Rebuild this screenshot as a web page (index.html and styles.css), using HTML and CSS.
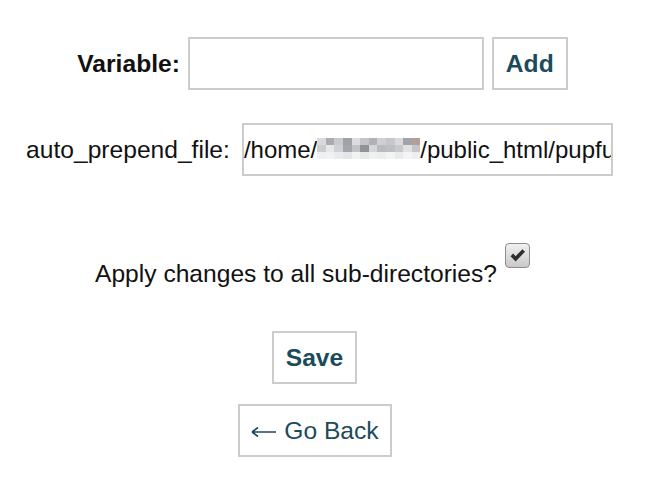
FILE: index.html
```html
<!DOCTYPE html>
<html>
<head>
<meta charset="utf-8">
<link rel="stylesheet" href="styles.css">
</head>
<body>
<form class="page">
  <div class="row row-var">
    <label class="label-bold" for="var">Variable:</label>
    <input class="field field-var" id="var" type="text">
    <button class="btn btn-bold" type="button">Add</button>
  </div>
  <div class="row row-file">
    <label class="label">auto_prepend_file:</label>
    <div class="field field-file"><span class="txt">/home/</span><span class="mosaic"><i style="background:#d9dadc"></i><i style="background:#a9abaf"></i><i style="background:#c9cacd"></i><i style="background:#9fa2a6"></i><i style="background:#dcdddf"></i><i style="background:#c2c4c7"></i><i style="background:#b0b2b6"></i><i style="background:#cfd0d2"></i><i style="background:#c5c7ca"></i><i style="background:#d8d9db"></i><i style="background:#a0a3a8"></i><i style="background:#b59e98"></i><i style="background:#cbcdd0"></i><i style="background:#e7e8e9"></i><i style="background:#d0d1d3"></i><i style="background:#a3a6aa"></i><i style="background:#c1c3c6"></i><i style="background:#8f9297"></i><i style="background:#d5d6d8"></i><i style="background:#b9bbbf"></i><i style="background:#bdbfc2"></i><i style="background:#c7c9cc"></i><i style="background:#e0e1e2"></i><i style="background:#c4c6c9"></i><i style="background:#eeeff0"></i><i style="background:#f1f1f2"></i><i style="background:#eaebec"></i><i style="background:#e4e5e6"></i><i style="background:#f2f2f3"></i><i style="background:#e8e9ea"></i><i style="background:#f0f0f1"></i><i style="background:#eceded"></i><i style="background:#f3f3f4"></i><i style="background:#e9eaeb"></i><i style="background:#f4f4f5"></i><i style="background:#eeeeef"></i></span><span class="txt">/public_html/pupfunctions.php</span></div>
  </div>
  <div class="row row-apply">
    <label class="label label-apply" for="sub">Apply changes to all sub-directories?</label>
    <span class="checkbox" id="sub">
      <svg width="17" height="15" viewBox="0 0 17 15"><path d="M1.5 8.2 L4.2 5.6 L6.6 8.2 L13.4 1.2 L16 3.8 L6.6 13.4 Z" fill="#2e2e2e"/></svg>
    </span>
  </div>
  <div class="row row-save">
    <button class="btn btn-bold" type="button">Save</button>
  </div>
  <div class="row row-back">
    <button class="btn btn-back" type="button"><svg class="arrow" width="26" height="12" viewBox="0 0 26 12"><path d="M1 6 H25 M1 6 L7 1.5 M1 6 L7 10.5" fill="none" stroke="#1b4b5b" stroke-width="1.6"/></svg> Go Back</button>
  </div>
</form>
</body>
</html>
```

FILE: styles.css
```css
html, body {
  margin: 0;
  padding: 0;
  background: #ffffff;
}

body {
  font-family: "Liberation Sans", Arial, sans-serif;
  font-size: 24.6px;
  color: #111111;
}

.page {
  display: flex;
  flex-direction: column;
  padding-top: 37px;
}

.row {
  display: flex;
  justify-content: center;
  align-items: center;
}

.row-var {
  gap: 8px;
  padding-right: 2px;
}

.row-file {
  margin-top: 33px;
  gap: 12px;
  padding-right: 8px;
}

.row-apply {
  margin-top: 67px;
  align-items: flex-start;
  gap: 8px;
  padding-right: 22px;
}

.row-save {
  margin-top: 43px;
  padding-right: 18px;
}

.row-back {
  margin-top: 20px;
  padding-right: 17px;
}

.label-bold {
  font-weight: bold;
  color: #111111;
}

.label {
  color: #111111;
}

.label-apply {
  padding-top: 17px;
  line-height: 28px;
}

.field {
  box-sizing: border-box;
  height: 53px;
  border: 2px solid #cccccc;
  background: #ffffff;
  font-family: "Liberation Sans", Arial, sans-serif;
  font-size: 24px;
  color: #111111;
  outline: none;
  margin: 0;
}

.field-var {
  width: 296px;
  padding: 0 4px;
}

.field-file {
  width: 371px;
  padding: 0 0 0 0;
  display: flex;
  align-items: center;
  overflow: hidden;
  white-space: nowrap;
}

.txt {
  flex: none;
}

.mosaic {
  flex: none;
  display: grid;
  grid-template-columns: repeat(12, 8.6px);
  grid-auto-rows: 7px;
  width: 103px;
  height: 21px;
  margin-top: -2px;
}

.mosaic i {
  display: block;
}

.btn {
  box-sizing: border-box;
  height: 53px;
  border: 2px solid #cccccc;
  background: #ffffff;
  color: #1b4b5b;
  font-family: "Liberation Sans", Arial, sans-serif;
  font-size: 24.6px;
  line-height: 28px;
  padding: 10px 12px;
  margin: 0;
  cursor: pointer;
}

.btn-bold {
  font-weight: bold;
}

.btn-back {
  padding: 10px 11px;
}

.arrow {
  vertical-align: 1px;
}

.checkbox {
  box-sizing: border-box;
  width: 25px;
  height: 25px;
  border: 1px solid #8e8e8e;
  border-radius: 4px;
  background: linear-gradient(#f0f0f0, #c9c9c9);
  display: flex;
  align-items: center;
  justify-content: center;
}
```
